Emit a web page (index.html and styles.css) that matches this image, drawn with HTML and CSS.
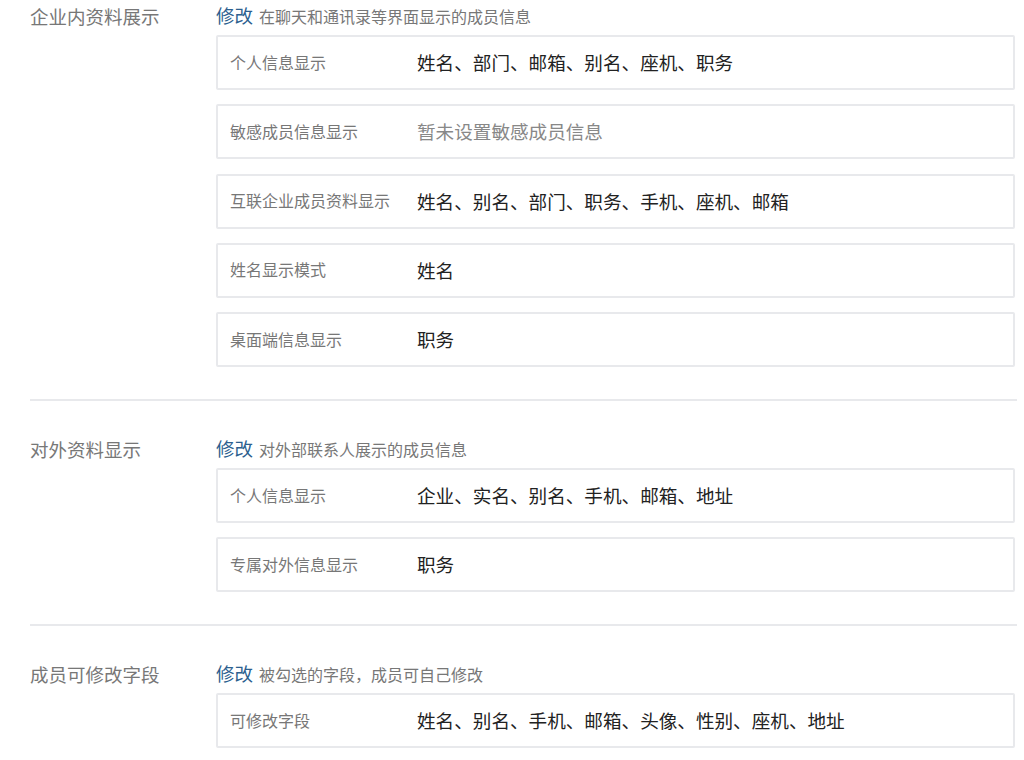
FILE: index.html
```html
<!DOCTYPE html>
<html lang="zh-CN">
<head>
<meta charset="utf-8">
<title>成员资料设置</title>
<link rel="stylesheet" href="styles.css">
</head>
<body>
<div class="page">
  <section class="section">
    <div class="sec-title">企业内资料展示</div>
    <div class="sec-body">
      <div class="sec-head"><a class="edit">修改</a><span class="desc">在聊天和通讯录等界面显示的成员信息</span></div>
      <div class="rows">
        <div class="row"><div class="row-label">个人信息显示</div><div class="row-value">姓名、部门、邮箱、别名、座机、职务</div></div>
        <div class="row"><div class="row-label">敏感成员信息显示</div><div class="row-value muted">暂未设置敏感成员信息</div></div>
        <div class="row"><div class="row-label">互联企业成员资料显示</div><div class="row-value">姓名、别名、部门、职务、手机、座机、邮箱</div></div>
        <div class="row"><div class="row-label">姓名显示模式</div><div class="row-value">姓名</div></div>
        <div class="row"><div class="row-label">桌面端信息显示</div><div class="row-value">职务</div></div>
      </div>
    </div>
  </section>
  <section class="section">
    <div class="sec-title">对外资料显示</div>
    <div class="sec-body">
      <div class="sec-head"><a class="edit">修改</a><span class="desc">对外部联系人展示的成员信息</span></div>
      <div class="rows">
        <div class="row"><div class="row-label">个人信息显示</div><div class="row-value">企业、实名、别名、手机、邮箱、地址</div></div>
        <div class="row"><div class="row-label">专属对外信息显示</div><div class="row-value">职务</div></div>
      </div>
    </div>
  </section>
  <section class="section">
    <div class="sec-title">成员可修改字段</div>
    <div class="sec-body">
      <div class="sec-head"><a class="edit">修改</a><span class="desc">被勾选的字段，成员可自己修改</span></div>
      <div class="rows">
        <div class="row"><div class="row-label">可修改字段</div><div class="row-value">姓名、别名、手机、邮箱、头像、性别、座机、地址</div></div>
      </div>
    </div>
  </section>
</div>
</body>
</html>
```
FILE: styles.css
```css
html, body {
  margin: 0;
  padding: 0;
  background: #ffffff;
}
body {
  font-family: "Noto Sans CJK SC", "Noto Sans", "Liberation Sans", sans-serif;
  color: #222;
}
.page {
  padding: 4px 7px 0 30px;
  width: 987px;
}
.section {
  display: flex;
  padding: 36px 0 32px;
  border-bottom: 2px solid #e8e9ec;
}
.section:first-child {
  padding-top: 0;
}
.section:last-child {
  border-bottom: none;
}
.sec-title {
  width: 186px;
  flex: none;
  font-size: 18.5px;
  line-height: 24px;
  color: #777;
}
.sec-body {
  width: 799px;
}
.sec-head {
  height: 24px;
  line-height: 23px;
  margin-bottom: 7px;
  white-space: nowrap;
}
.edit {
  font-size: 18.5px;
  color: #2d5f8f;
  cursor: pointer;
}
.desc {
  font-size: 16px;
  color: #777;
  margin-left: 6px;
}
.rows {
  display: flex;
  flex-direction: column;
  gap: 14.25px;
}
.row {
  display: flex;
  align-items: center;
  height: 55px;
  box-sizing: border-box;
  border: 2px solid #e8e9ec;
  border-radius: 2px;
  padding-left: 12px;
  padding-bottom: 2px;
}
.row-label {
  width: 187px;
  flex: none;
  font-size: 16px;
  color: #777;
}
.row-value {
  font-size: 18.6px;
  color: #222;
}
.row-value.muted {
  color: #888;
}
```
